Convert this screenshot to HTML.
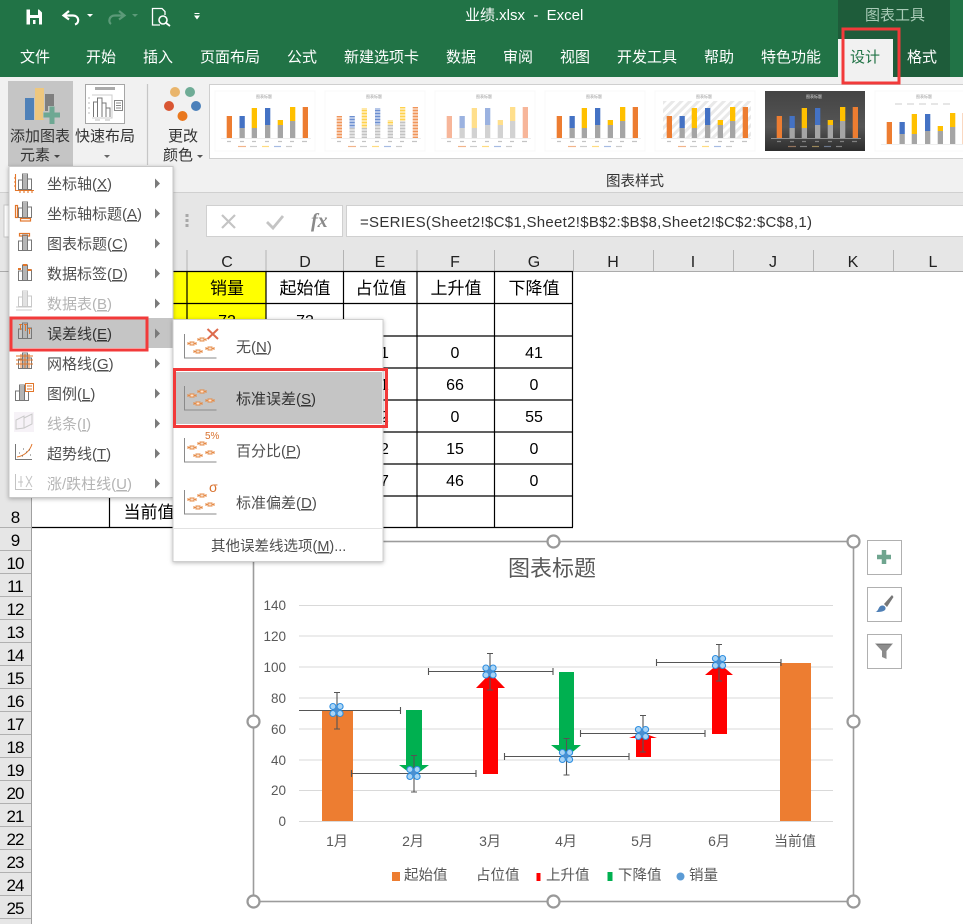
<!DOCTYPE html>
<html lang="zh"><head><meta charset="utf-8"><title>业绩.xlsx - Excel</title>
<style>
html,body{margin:0;padding:0;background:#fff;width:963px;height:924px;overflow:hidden}
svg{display:block;font-family:"Liberation Sans","Noto Sans CJK SC",sans-serif}
.tab{font-size:15px;fill:#fff}
.m{font-size:15px;fill:#4f4f4f}
.d{font-size:15px;fill:#b4b4b4}
.r{font-size:15px;fill:#333}
.c{font-size:16px;fill:#222;text-anchor:middle}
.s{font-size:17px;fill:#000;text-anchor:middle}
.n{font-size:16px;fill:#000;text-anchor:middle}
.h{font-size:17px;letter-spacing:-1px;fill:#000;text-anchor:middle}
.ax{font-size:13.5px;fill:#595959;text-anchor:end}
.xl{font-size:14px;fill:#595959;text-anchor:middle}
.lg{font-size:14.5px;fill:#595959}
.rb{font-size:15px;fill:#333;text-anchor:middle}
.u{text-decoration:underline}
</style></head><body>
<svg width="963" height="924" viewBox="0 0 963 924" xmlns="http://www.w3.org/2000/svg">
<defs>
<filter id="sh" x="-10%" y="-10%" width="120%" height="120%"><feDropShadow dx="0" dy="1" stdDeviation="2" flood-color="#000" flood-opacity=".28"/></filter>
<g id="bars">
<rect x="11.7" y="25" width="5.3" height="22" style="fill:var(--o)"/>
<rect x="24.5" y="37" width="5.3" height="10" style="fill:var(--g)"/><rect x="24.5" y="25" width="5.3" height="12" style="fill:var(--b)"/>
<rect x="36.7" y="37" width="5.3" height="10" style="fill:var(--g)"/><rect x="36.7" y="17" width="5.3" height="20" style="fill:var(--y)"/>
<rect x="50" y="34" width="5.3" height="13" style="fill:var(--g)"/><rect x="50" y="17" width="5.3" height="17" style="fill:var(--b)"/>
<rect x="62.7" y="34" width="5.3" height="13" style="fill:var(--g)"/><rect x="62.7" y="29" width="5.3" height="5" style="fill:var(--y)"/>
<rect x="75" y="30" width="5.3" height="17" style="fill:var(--g)"/><rect x="75" y="16" width="5.3" height="14" style="fill:var(--y)"/>
<rect x="87.7" y="16" width="5.3" height="31" style="fill:var(--o)"/>
<path d="M6 47.500H96" stroke="#ddd" stroke-width=".6"/>
</g>
<g id="leg">
<path d="M12 50.500h4M25 50.500h4M37 50.500h4M50 50.500h4M63 50.500h4M75 50.500h4M87 50.500h5" stroke="#c4c4c4" stroke-width="1.200"/>
<path d="M23 55.500h8" stroke="#f2b48a" stroke-width="1.200"/><path d="M35 55.500h7" stroke="#ccc" stroke-width="1.200"/><path d="M47 55.500h7" stroke="#ffdc80" stroke-width="1.200"/><path d="M59 55.500h7" stroke="#a6bbe3" stroke-width="1.200"/><path d="M71 55.500h6" stroke="#ccc" stroke-width="1.200"/>
</g>
<pattern id="hatch" width="6" height="6" patternUnits="userSpaceOnUse" patternTransform="rotate(45)"><rect width="6" height="6" fill="#fff"/><rect width="3" height="6" fill="#e9e9e9"/></pattern>
<linearGradient id="dk" x1="0" y1="0" x2="0" y2="1"><stop offset="0" stop-color="#444"/><stop offset=".6" stop-color="#555"/><stop offset="1" stop-color="#2c2c2c"/></linearGradient>
<g id="em" fill="none" stroke="#e58a45" stroke-width="1">
<path d="M0 0V24H32" stroke="#8a8a8a" stroke-width="1"/>
<path d="M3.500 9.500h8M3.500 8v3M11.500 8v3"/><rect x="5.500" y="8" width="4" height="3" fill="#fbe3d0"/>
<path d="M13.500 5.500h8M13.500 4v3M21.500 4v3"/><rect x="15.500" y="4" width="4" height="3" fill="#fbe3d0"/>
<path d="M9.500 17.500h8M9.500 16v3M17.500 16v3"/><rect x="11.500" y="16" width="4" height="3" fill="#fbe3d0"/>
<path d="M21.500 14.500h8M21.500 13v3M29.500 13v3"/><rect x="23.500" y="13" width="4" height="3" fill="#fbe3d0"/>
</g>
<g id="mb"><path d="M3.500 18V9h4v9M7.500 18V3h5v15M12.500 18V8h4v10M3 18.500H17" fill="none" stroke="#777"/><rect x="8" y="4" width="4" height="14" fill="#b5b5b5"/></g>
<g id="mk">
<circle cx="0" cy="0" r="4.500" fill="#5b9bd5"/>
<g fill="#a9d4f5" stroke="#2e8ee0" stroke-width="1.100"><circle cx="-3.600" cy="-3.500" r="3"/><circle cx="3.600" cy="-3.500" r="3"/><circle cx="-3.600" cy="3.500" r="3"/><circle cx="3.600" cy="3.500" r="3"/></g>
<circle cx="0" cy="0" r="2.600" fill="#4a8fd0"/>
</g>
<path id="ebv" d="M-3 0h6M0 0v36.500M-3 36.500h6" fill="none" stroke="#555" stroke-width="1.100"/>
<path id="ebh" d="M0 -3.500v7M0 0H124.500M124.500 -3.500v7" fill="none" stroke="#555" stroke-width="1.100"/>
<circle id="hd" r="6" fill="#fff" stroke="#999" stroke-width="2.200"/>
</defs>

<!-- sheet -->
<rect width="963" height="924" fill="#fff"/>
<rect x="0" y="192" width="963" height="58" fill="#e6e6e6"/>
<rect x="0" y="250" width="963" height="21" fill="#e6e6e6"/>
<rect x="0" y="271" width="32" height="653" fill="#e6e6e6"/>
<path d="M31.500 250V924" stroke="#a0a0a0"/>
<path d="M0 271.500H963" stroke="#ababab"/>
<path d="M573.500 250V271M653.500 250V271M733.500 250V271M813.500 250V271M893.500 250V271M187 250V271M266 250V271M343.500 250V271M417 250V271M494.500 250V271" stroke="#b4b4b4"/>
<path d="M0 550.500H31M0 573.500H31M0 596.500H31M0 619.500H31M0 642.500H31M0 665.500H31M0 688.500H31M0 711.500H31M0 734.500H31M0 757.500H31M0 780.500H31M0 803.500H31M0 826.500H31M0 849.500H31M0 872.500H31M0 895.500H31M0 918.500H31M0 527.500H31" stroke="#b0b0b0"/>
<text class="c" x="227" y="267">C</text><text class="c" x="305" y="267">D</text><text class="c" x="380" y="267">E</text><text class="c" x="455" y="267">F</text><text class="c" x="534" y="267">G</text><text class="c" x="613" y="267">H</text><text class="c" x="693" y="267">I</text><text class="c" x="773" y="267">J</text><text class="c" x="853" y="267">K</text><text class="c" x="933" y="267">L</text>
<text class="h" x="15" y="523">8</text><text class="h" x="15" y="546">9</text><text class="h" x="15" y="569">10</text><text class="h" x="15" y="592">11</text><text class="h" x="15" y="615">12</text><text class="h" x="15" y="638">13</text><text class="h" x="15" y="661">14</text><text class="h" x="15" y="684">15</text><text class="h" x="15" y="707">16</text><text class="h" x="15" y="730">17</text><text class="h" x="15" y="753">18</text><text class="h" x="15" y="776">19</text><text class="h" x="15" y="799">20</text><text class="h" x="15" y="822">21</text><text class="h" x="15" y="845">22</text><text class="h" x="15" y="868">23</text><text class="h" x="15" y="891">24</text><text class="h" x="15" y="914">25</text>

<rect x="109" y="271" width="157" height="65" fill="#ffff00"/>
<path d="M32 271.500H573M32 303.500H573M109 336H573M109 368H573M109 400H573M109 432H573M109 464H573M109 496H573M32 527.500H573" stroke="#000" stroke-width="1.200"/>
<path d="M109.500 271V527M187 271V527M266 271V527M343.500 271V527M417 271V527M494.500 271V527M572.500 271V527" stroke="#000" stroke-width="1.200"/>
<text class="s" x="227" y="294">销量</text><text class="s" x="305" y="294">起始值</text><text class="s" x="381" y="294">占位值</text><text class="s" x="456" y="294">上升值</text><text class="s" x="534" y="294">下降值</text>
<text class="n" x="227" y="326">72</text><text class="n" x="305" y="326">72</text>
<text class="n" x="380" y="358">31</text><text class="n" x="380" y="390">31</text><text class="n" x="380" y="422">42</text><text class="n" x="380" y="454">42</text><text class="n" x="380" y="486">57</text>
<text class="n" x="455" y="358">0</text><text class="n" x="455" y="390">66</text><text class="n" x="455" y="422">0</text><text class="n" x="455" y="454">15</text><text class="n" x="455" y="486">46</text>
<text class="n" x="534" y="358">41</text><text class="n" x="534" y="390">0</text><text class="n" x="534" y="422">55</text><text class="n" x="534" y="454">0</text><text class="n" x="534" y="486">0</text>
<text class="s" x="149" y="518">当前值</text>

<!-- chart -->
<rect x="253.500" y="541.500" width="600" height="360" fill="#fff" stroke="#9c9c9c" stroke-width="1.600"/>
<text x="552" y="576" font-size="22" fill="#595959" text-anchor="middle">图表标题</text>
<path d="M299 605.500H833M299 636H833M299 667H833M299 698H833M299 729H833M299 760H833M299 790.500H833M299 821.500H833" stroke="#d9d9d9" stroke-width="1.100"/>
<text class="ax" x="286" y="610">140</text><text class="ax" x="286" y="641">120</text><text class="ax" x="286" y="672">100</text><text class="ax" x="286" y="703">80</text><text class="ax" x="286" y="734">60</text><text class="ax" x="286" y="765">40</text><text class="ax" x="286" y="795">20</text><text class="ax" x="286" y="826">0</text>
<text class="xl" x="337" y="846">1月</text><text class="xl" x="413" y="846">2月</text><text class="xl" x="490" y="846">3月</text><text class="xl" x="566" y="846">4月</text><text class="xl" x="642" y="846">5月</text><text class="xl" x="719" y="846">6月</text><text class="xl" x="795" y="846">当前值</text>
<rect x="322" y="711" width="31" height="110" fill="#ed7d31"/>
<rect x="780" y="663" width="31" height="158" fill="#ed7d31"/>
<path d="M406 710H422V765H429L414 776L399 765H406Z" fill="#00b050"/>
<path d="M559 672H574V745H581L566.500 757L551 745H559Z" fill="#00b050"/>
<path d="M483 774V688H476L490.500 673L505 688H498V774Z" fill="#f00"/>
<path d="M636 757V738H629L643 733L657 738H651V757Z" fill="#f00"/>
<path d="M712 734V675H705L719 663L733 675H727V734Z" fill="#f00"/>
<use href="#ebv" x="337" y="692.500"/><path d="M299 710.500H400.500M400.500 707v7" fill="none" stroke="#555" stroke-width="1.100"/>
<use href="#ebv" x="414" y="755.500"/><use href="#ebh" x="351.500" y="773.500"/>
<use href="#ebv" x="490" y="653.500"/><use href="#ebh" x="428.500" y="671.500"/>
<use href="#ebv" x="566.500" y="738.500"/><use href="#ebh" x="504.500" y="756.500"/>
<use href="#ebv" x="643" y="715.500"/><use href="#ebh" x="580.500" y="733.500"/>
<use href="#ebv" x="719" y="644.500"/><use href="#ebh" x="656.500" y="662.500"/>
<use href="#mk" x="336.500" y="710"/><use href="#mk" x="413.500" y="773"/><use href="#mk" x="489.500" y="671.500"/><use href="#mk" x="566" y="756"/><use href="#mk" x="642" y="733"/><use href="#mk" x="719" y="662"/>
<rect x="392" y="872" width="8" height="9" fill="#ed7d31"/><text class="lg" x="404" y="880">起始值</text>
<text class="lg" x="476" y="880">占位值</text>
<rect x="536.500" y="873" width="4" height="8" fill="#f00"/><text class="lg" x="546" y="880">上升值</text>
<rect x="607.500" y="872" width="5" height="9" fill="#00b050"/><text class="lg" x="618" y="880">下降值</text>
<circle cx="680.500" cy="876.500" r="4" fill="#5b9bd5"/><text class="lg" x="689" y="880">销量</text>
<use href="#hd" x="553.500" y="541.500"/><use href="#hd" x="853.500" y="541.500"/><use href="#hd" x="253.500" y="721.500"/><use href="#hd" x="853.500" y="721.500"/><use href="#hd" x="253.500" y="901.500"/><use href="#hd" x="553.500" y="901.500"/><use href="#hd" x="853.500" y="901.500"/>

<rect x="867.500" y="540.500" width="34" height="34" fill="#fff" stroke="#b0b0b0"/>
<path d="M877 557h14M884 550v14" stroke="#6fa58f" stroke-width="4.500"/>
<rect x="867.500" y="587.500" width="34" height="34" fill="#fff" stroke="#b0b0b0"/>
<path d="M884 604L892 595L893.500 597L887 607Z" fill="#777"/><path d="M875.500 612C879 611 878 606 882 605.500C885 605 886.500 608 885 610C883 612 879 612 875.500 612Z" fill="#4f7fb5"/>
<rect x="867.500" y="634.500" width="34" height="34" fill="#fff" stroke="#b0b0b0"/>
<path d="M875 643.500H893L886.500 651V659L882 657V651Z" fill="#8c8c8c"/><path d="M877 644.500H891" stroke="#777"/>

<!-- title/ribbon -->
<rect x="0" y="0" width="963" height="77" fill="#217346"/>
<rect x="838" y="0" width="112" height="77" fill="#1e5c3a"/>
<text x="465" y="20" font-size="15" fill="#fff" style="white-space:pre">业绩.xlsx  -  Excel</text>
<text x="865" y="20" font-size="15" fill="#a9cbb7">图表工具</text>
<!-- QAT -->
<path d="M26.500 9.500H39L42 12.500V24.500H26.500Z" fill="#fff"/><rect x="30" y="9.500" width="8" height="5.500" fill="#217346"/><rect x="30" y="18" width="9" height="6.500" fill="#217346"/><rect x="33" y="20" width="2.500" height="4" fill="#fff"/>
<path d="M69 11L63.500 15.500L69 19.500" fill="none" stroke="#fff" stroke-width="2.200"/><path d="M64 15.500H73C79 15.500 80 23 75 24.500" fill="none" stroke="#fff" stroke-width="2.200"/>
<path d="M87 14H93L90 17Z" fill="#fff"/>
<path d="M119 11L124.500 15.500L119 19.500" fill="none" stroke="#5c9a79" stroke-width="2.200"/><path d="M124 15.500H115C109 15.500 108 22 111 24" fill="none" stroke="#5c9a79" stroke-width="2.200"/>
<path d="M132 14H138L135 17Z" fill="#5c9a79"/>
<path d="M160 25H152.500V8.500H162L165 11.500V15" fill="none" stroke="#fff" stroke-width="1.300"/><circle cx="163" cy="20" r="4" fill="none" stroke="#fff" stroke-width="1.600"/><path d="M166 23L170 26" stroke="#fff" stroke-width="1.800"/>
<path d="M194.500 13.500H199.500" stroke="#fff"/><path d="M194 15.500H200L197 19.500Z" fill="#fff"/>
<!-- tabs -->
<rect x="838" y="39" width="55" height="38" fill="#f1f1f1"/>
<text class="tab" x="20" y="62">文件</text><text class="tab" x="86" y="62">开始</text><text class="tab" x="143" y="62">插入</text><text class="tab" x="200" y="62">页面布局</text><text class="tab" x="287" y="62">公式</text><text class="tab" x="344" y="62">新建选项卡</text><text class="tab" x="446" y="62">数据</text><text class="tab" x="503" y="62">审阅</text><text class="tab" x="560" y="62">视图</text><text class="tab" x="617" y="62">开发工具</text><text class="tab" x="704" y="62">帮助</text><text class="tab" x="761" y="62">特色功能</text>
<text class="tab" x="850" y="62" style="fill:#217346">设计</text><text class="tab" x="907" y="62">格式</text>

<rect x="0" y="77" width="963" height="115" fill="#f1f1f1"/>
<path d="M0 192.500H963" stroke="#d0d0d0"/>
<rect x="8" y="81" width="65" height="85" fill="#c5c5c5"/>
<rect x="25" y="98" width="9" height="22" fill="#4f81b8"/><rect x="35" y="88" width="9" height="32" fill="#eec77e"/><rect x="45" y="94" width="9" height="17" fill="#7f7f7f"/>
<path d="M43 115h17M52 106v18" stroke="#c5c5c5" stroke-width="8"/>
<path d="M43.500 115h16.500M52 106.500v17.500" stroke="#6ea893" stroke-width="5"/>
<rect x="85.500" y="84.500" width="39" height="39" fill="#fff" stroke="#a6a6a6"/>
<rect x="95" y="87" width="20" height="3" fill="#aaa"/>
<path d="M92 95H112V118H92" fill="none" stroke="#ccc"/><path d="M93.500 117V102H97.500V117M97.500 117V98H102V117M102 117V103H106V117M106 117V108H110V117" fill="none" stroke="#777"/>
<rect x="114.500" y="100.500" width="8" height="10" fill="#fff" stroke="#888"/><path d="M116 103h5M116 105.500h5M116 108h5" stroke="#888"/>
<path d="M88 98h2M88 103h2M88 108h2M88 113h2M95 120h5M105 120h5" stroke="#bbb"/>
<text class="rb" x="40" y="141">添加图表</text><text class="rb" x="35" y="160">元素</text><path d="M54 155H60L57 158Z" fill="#444"/>
<text class="rb" x="105" y="141">快速布局</text><path d="M104 155H110L107 158Z" fill="#666"/>
<path d="M147.500 84V165" stroke="#c6c6c6" stroke-width="1.200"/>
<circle cx="175" cy="92" r="5" fill="#e9b56c"/><circle cx="190" cy="92" r="5" fill="#6fac96"/><circle cx="169" cy="106" r="5" fill="#d95633"/><circle cx="196" cy="106" r="5" fill="#4b80ba"/><circle cx="182.500" cy="116" r="5" fill="#e9781f"/>
<text class="rb" x="183" y="141">更改</text><text class="rb" x="178" y="160">颜色</text><path d="M197 155H203L200 158Z" fill="#555"/>
<!-- gallery -->
<rect x="209.500" y="84.500" width="760" height="74" fill="#fff" stroke="#cfcfcf"/>
<g font-size="4" fill="#999" text-anchor="middle">
<rect x="215" y="91" width="100" height="60" fill="#fff" stroke="#f8f8f8"/>
<use href="#bars" x="215" y="91" style="--o:#ed7d31;--g:#a5a5a5;--y:#ffc000;--b:#4472c4"/><text x="264" y="98">图表标题</text><use href="#leg" x="215" y="91"/>
<rect x="325" y="91" width="100" height="60" fill="#fff" stroke="#f8f8f8"/>
<use href="#bars" x="325" y="91" style="--o:#f0955a;--g:#c2c2c2;--y:#ffd24d;--b:#6c8fd0"/><text x="374" y="98">图表标题</text><use href="#leg" x="325" y="91"/>
<path d="M335 118H420M335 121H420M335 124H420M335 127H420M335 130H420M335 133H420M335 136H420M335 112H420M335 115H420M335 109H420" stroke="#fff" stroke-width="1"/>
<rect x="435" y="91" width="100" height="60" fill="#fff" stroke="#f8f8f8"/>
<use href="#bars" x="435" y="91" style="--o:#f7b69a;--g:#d2d2d2;--y:#ffdf8c;--b:#9bb2e0"/><text x="484" y="98">图表标题</text><use href="#leg" x="435" y="91"/>
<rect x="545" y="91" width="100" height="60" fill="#fff" stroke="#f8f8f8"/>
<use href="#bars" x="545" y="91" style="--o:#ed7d31;--g:#a5a5a5;--y:#ffc000;--b:#4472c4"/><text x="594" y="98">图表标题</text><use href="#leg" x="545" y="91"/>
<rect x="655" y="91" width="100" height="60" fill="#fff" stroke="#f8f8f8"/>
<rect x="663" y="101" width="88" height="37" fill="url(#hatch)"/>
<use href="#bars" x="655" y="91" style="--o:#ed7d31;--g:#a5a5a5;--y:#ffc000;--b:#4472c4"/><text x="704" y="98">图表标题</text><use href="#leg" x="655" y="91"/>
<rect x="765" y="91" width="100" height="60" fill="url(#dk)"/>
<use href="#bars" x="765" y="91" style="--o:#ed7d31;--g:#a5a5a5;--y:#ffc000;--b:#4472c4"/><text x="814" y="98" fill="#ddd">图表标题</text><use href="#leg" x="765" y="91" opacity=".5"/>
<rect x="875" y="91" width="95" height="60" fill="#fff" stroke="#f8f8f8"/>
<use href="#bars" x="875" y="97" style="--o:#ed7d31;--g:#a5a5a5;--y:#ffc000;--b:#4472c4"/><text x="924" y="98">图表标题</text>
<path d="M895 104h7M907 104h7M919 104h7M931 104h7M943 104h7" stroke="#d8d8d8" stroke-width="1.200"/>
</g>
<rect x="963" y="80" width="10" height="90" fill="#f1f1f1"/>
<text class="rb" x="635" y="186" style="font-size:14.500px">图表样式</text>

<!-- formula bar -->
<rect x="4" y="205" width="10" height="32" fill="#fff" stroke="#c8c8c8"/>
<g fill="#a8a8a8"><rect x="185.500" y="214" width="3" height="3"/><rect x="185.500" y="219" width="3" height="3"/><rect x="185.500" y="224" width="3" height="3"/></g>
<rect x="206.500" y="205.500" width="136" height="31" fill="#fff" stroke="#d0d0d0"/>
<rect x="346.500" y="205.500" width="620" height="31" fill="#fff" stroke="#d0d0d0"/>
<path d="M222 215L235 228M235 215L222 228" stroke="#c4c4c4" stroke-width="2.200"/>
<path d="M267 222L273 228L283 216" fill="none" stroke="#c4c4c4" stroke-width="2.800"/>
<text x="311" y="227" font-size="20" font-style="italic" font-weight="bold" fill="#8a8a8a" font-family="Liberation Serif, serif">fx</text>
<text x="360" y="227" font-size="15" fill="#333" textLength="452" lengthAdjust="spacing">=SERIES(Sheet2!$C$1,Sheet2!$B$2:$B$8,Sheet2!$C$2:$C$8,1)</text>

<!-- main menu -->
<rect x="9" y="166.500" width="164" height="331" fill="#fff" stroke="#c8c8c8" filter="url(#sh)"/>
<rect x="10" y="318" width="163" height="30" fill="#c5c5c5"/>
<text class="m" x="47" y="189">坐标轴(<tspan class="u">X</tspan>)</text>
<text class="m" x="47" y="219">坐标轴标题(<tspan class="u">A</tspan>)</text>
<text class="m" x="47" y="249">图表标题(<tspan class="u">C</tspan>)</text>
<text class="m" x="47" y="279">数据标签(<tspan class="u">D</tspan>)</text>
<text class="d" x="47" y="309">数据表(<tspan class="u">B</tspan>)</text>
<text class="r" x="47" y="339">误差线(<tspan class="u">E</tspan>)</text>
<text class="m" x="47" y="369">网格线(<tspan class="u">G</tspan>)</text>
<text class="m" x="47" y="399">图例(<tspan class="u">L</tspan>)</text>
<text class="d" x="47" y="429">线条(<tspan class="u">I</tspan>)</text>
<text class="m" x="47" y="459">超势线(<tspan class="u">T</tspan>)</text>
<text class="d" x="47" y="489">涨/跌柱线(<tspan class="u">U</tspan>)</text>
<g fill="#7a7a7a"><path d="M155 178.500L160 183.500L155 188.500Z"/><path d="M155 208.500L160 213.500L155 218.500Z"/><path d="M155 238.500L160 243.500L155 248.500Z"/><path d="M155 268.500L160 273.500L155 278.500Z"/><path d="M155 298.500L160 303.500L155 308.500Z"/><path d="M155 328.500L160 333.500L155 338.500Z"/><path d="M155 358.500L160 363.500L155 368.500Z"/><path d="M155 388.500L160 393.500L155 398.500Z"/><path d="M155 418.500L160 423.500L155 428.500Z"/><path d="M155 448.500L160 453.500L155 458.500Z"/><path d="M155 478.500L160 483.500L155 488.500Z"/></g>
<!-- menu icons -->
<use href="#mb" x="15" y="171"/><path d="M15.500 174V190.500H34M14 178h2M14 182h2M14 186h2M20 190v3M24 190v3M28 190v3M32 190v3" fill="none" stroke="#e2762a" stroke-width="1.100"/>
<use href="#mb" x="15" y="199"/><rect x="15.500" y="205.500" width="2" height="12" fill="none" stroke="#e2762a" stroke-width="1.200"/><rect x="20.500" y="218.500" width="10" height="2.500" fill="none" stroke="#e2762a" stroke-width="1.200"/>
<rect x="19.500" y="233.500" width="10" height="2.500" fill="none" stroke="#e2762a" stroke-width="1.200"/><use href="#mb" x="15" y="232"/>
<use href="#mb" x="15" y="262"/><rect x="23" y="264" width="4" height="2" fill="#e2762a"/><rect x="27.500" y="269" width="4" height="2" fill="#e2762a"/><rect x="18" y="268" width="3" height="2" fill="#e2762a"/>
<g opacity=".4"><use href="#mb" x="15" y="288"/><path d="M16 307H32M16 310H32" stroke="#777"/></g>
<use href="#mb" x="15" y="320"/><path d="M20.500 324v6M25.500 324v7M29.500 328v6M19 324.500h3M24 324.500h3M28 328.500h3" stroke="#e2762a" fill="none"/>
<use href="#mb" x="15" y="350"/><path d="M16 356H33M16 360H33M16 364H33M21 354V368M25 354V368M29 354V368" stroke="#e2762a" fill="none" stroke-width=".9"/>
<use href="#mb" x="12" y="382"/><rect x="25.500" y="383.500" width="8" height="8" fill="#fff" stroke="#e2762a"/><path d="M27 386h5M27 389h5" stroke="#e2762a"/>
<g opacity=".45"><rect x="14" y="412" width="20" height="20" fill="#ece4ee"/><path d="M16 429V420L24 416V428ZM24 428L32 424V414L24 418" fill="none" stroke="#888"/></g>
<path d="M15.500 444V459.500H32" fill="none" stroke="#777"/><path d="M17 457C24 456 30 451 32 444" fill="none" stroke="#e2762a"/><path d="M19 453h1M23 449h1M26 452h1M29 450h1M30 455h1M22 456h1" stroke="#666"/>
<g opacity=".5" fill="none" stroke="#888"><path d="M15.500 474V489.500H32"/><path d="M18 482h5M21 476v11M26 476L32 487M32 476L26 487"/></g>

<!-- submenu -->
<rect x="173" y="319.500" width="210" height="242" fill="#fff" stroke="#cfcfcf" filter="url(#sh)"/>
<rect x="175" y="372" width="207" height="52" fill="#c5c5c5"/>
<use href="#em" x="184.500" y="334"/>
<path d="M207.500 329L218 339M218 329L207.500 339" stroke="#dd6b4d" stroke-width="2"/>
<use href="#em" x="184.500" y="386"/>
<use href="#em" x="184.500" y="438"/><text x="205" y="439" font-size="10" fill="#d8702c">5%</text>
<use href="#em" x="184.500" y="490"/><text x="209" y="492" font-size="14" fill="#d8702c">σ</text>
<text class="m" x="236" y="352">无(<tspan class="u">N</tspan>)</text>
<text class="r" x="236" y="404">标准误差(<tspan class="u">S</tspan>)</text>
<text class="m" x="236" y="456">百分比(<tspan class="u">P</tspan>)</text>
<text class="m" x="236" y="508">标准偏差(<tspan class="u">D</tspan>)</text>
<path d="M174 528.500H382" stroke="#e2e2e2"/>
<text class="m" x="211" y="551" style="font-size:14.500px">其他误差线选项(<tspan class="u">M</tspan>)...</text>

<!-- red boxes -->
<g fill="none" stroke="#f23a3a" stroke-width="3">
<rect x="843" y="29" width="56" height="54"/>
<rect x="11" y="318" width="136" height="32"/>
<rect x="174.500" y="369.500" width="212" height="57"/>
</g>
</svg>
</body></html>
